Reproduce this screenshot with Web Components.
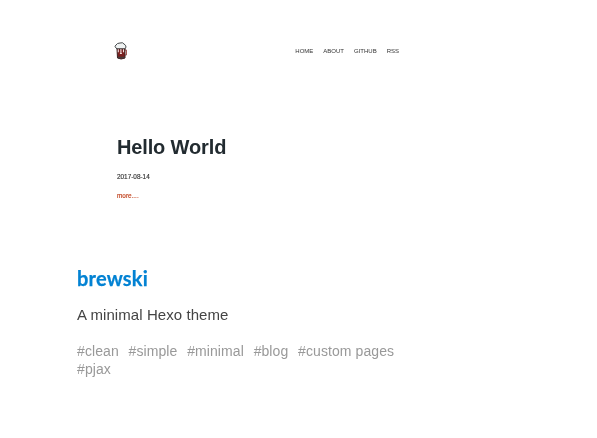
<!DOCTYPE html>
<html lang="en"><head><meta charset="utf-8"><title>brewski</title>
<style>body{margin:0;background:#fff;font-family:"Liberation Sans",Arial,sans-serif}</style></head><body>
<theme-card name="brewski"><theme-preview slot="preview"></theme-preview>A minimal Hexo theme
<theme-tag slot="tags">clean</theme-tag><theme-tag slot="tags">simple</theme-tag><theme-tag slot="tags">minimal</theme-tag><theme-tag slot="tags">blog</theme-tag><theme-tag slot="tags">custom pages</theme-tag><theme-tag slot="tags">pjax</theme-tag></theme-card>
<script>
class ThemeTag extends HTMLElement{constructor(){super();this.attachShadow({mode:'open'}).innerHTML=`<style>:host{display:block;white-space:nowrap}</style>#<slot></slot>`}}
customElements.define('theme-tag',ThemeTag);
class ThemePreview extends HTMLElement{constructor(){super();this.attachShadow({mode:'open'}).innerHTML=`<style>
:host{display:block;width:362px;height:213px;padding:42px 40px 0;box-sizing:border-box;color:#222b30}
header{display:flex;justify-content:space-between;height:18px}
svg{width:14px;height:18px;margin-left:-3px}
nav{display:flex;gap:10px;font-size:6px;line-height:18px;color:#333}
h1{font-size:20px;line-height:24px;letter-spacing:-.14px;margin:75px 0 0}
p{font-size:6.4px;line-height:8px;margin:14px 0 0;color:#333;-webkit-text-stroke:.15px}
.more{margin-top:11px;color:#c0401c}
</style><header><svg viewBox="0 0 14 18"><path d="M2 6Q0 4 2 3Q3 1 6 1Q9 0 10 2Q12 3 12 5L11 7H3Z" fill="#eff3f3" stroke="#45494b"/><path d="M11 8h1.5v5H11" fill="none" stroke="#a55b58"/><path d="M3 7H11V16Q7 18 3.5 16Z" fill="#7a201f" stroke="#3b2425"/><path d="M4.3 7.3v3M6.9 7v4.5M9.5 7.3v3M5.9 11.5h2" stroke="#f1dfdf" stroke-width="1.1"/><path d="M4 15.5h6.5" stroke="#443c3c" stroke-width="1.5"/></svg>
<nav><span>HOME</span><span>ABOUT</span><span>GITHUB</span><span>RSS</span></nav></header><h1>Hello World</h1><p>2017-08-14</p><p class="more">more....</p>`}}
customElements.define('theme-preview',ThemePreview);
class ThemeCard extends HTMLElement{constructor(){super();this.attachShadow({mode:'open'}).innerHTML=`<style>
:host{display:block;width:320px;margin-left:77px;will-change:transform}
h2{font:bold 20px/24px Lato,sans-serif;letter-spacing:.2px;color:#0282d3;-webkit-text-stroke:.25px;margin:53px 0 0}
.d{font-size:15px;line-height:20px;letter-spacing:.07px;margin-top:15px;color:#444}
.t{display:flex;flex-wrap:wrap;column-gap:9.8px;font-size:14px;line-height:18px;letter-spacing:.08px;color:#999;margin-top:17px}
</style><slot name="preview"></slot><h2></h2><div class="d"><slot></slot></div><div class="t"><slot name="tags"></slot></div>`}
connectedCallback(){this.shadowRoot.querySelector('h2').textContent=this.getAttribute('name')}}
customElements.define('theme-card',ThemeCard);
</script></body></html>
